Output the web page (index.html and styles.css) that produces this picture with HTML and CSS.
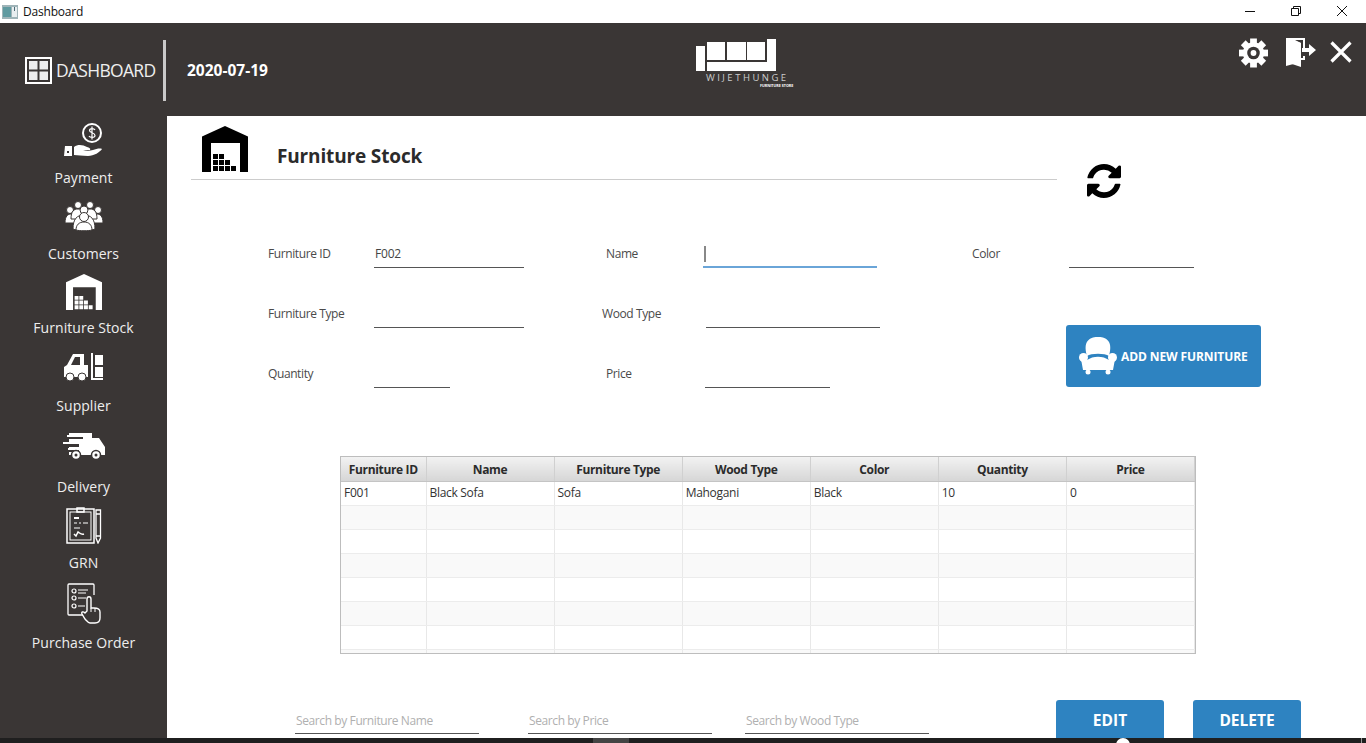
FILE: index.html
```html
<!DOCTYPE html>
<html lang="en">
  <head>
    <meta charset="UTF-8">
    <meta name="viewport" content="width=device-width, initial-scale=1.0">
    <title>Dashboard</title>
    <link rel="stylesheet" href="styles.css">
  </head>
  <body>
    <!-- window title bar -->
    <div class="titlebar">
      <svg class="app-icon" width="16" height="14" viewBox="0 0 16 14">
        <rect width="16" height="14" fill="#9fb4b8"/>
        <rect x="1" y="2" width="8" height="10" fill="#5f9aa0"/>
        <rect x="10" y="2" width="5" height="10" fill="#e8eef0"/>
        <rect x="12" y="2" width="1" height="4" fill="#4d6a75"/>
      </svg>
      <span class="app-title">Dashboard</span>
      <div class="window-controls">
        <svg width="12" height="12" viewBox="0 0 12 12"><path d="M1 6.5H11" stroke="#111" fill="none"/></svg>
        <svg width="12" height="12" viewBox="0 0 12 12"><path d="M1.5 3.5H8.5V10.5H1.5ZM3.5 3.5V1.5H10.5V8.5H8.5" stroke="#111" fill="none"/></svg>
        <svg width="12" height="12" viewBox="0 0 12 12"><path d="M1 1L11 11M11 1L1 11" stroke="#111" fill="none"/></svg>
      </div>
    </div>

    <div class="app">
      <header class="topbar">
        <div class="brand">
          <svg width="27" height="27" viewBox="0 0 27 27">
            <rect width="27" height="27" fill="#fff"/>
            <rect x="2" y="2" width="23" height="23" fill="#3a3635"/>
            <rect x="4" y="4" width="8.5" height="8.5" fill="#eee"/>
            <rect x="14.5" y="4" width="8.5" height="8.5" fill="#eee"/>
            <rect x="4" y="14.5" width="8.5" height="8.5" fill="#eee"/>
            <rect x="14.5" y="14.5" width="8.5" height="8.5" fill="#eee"/>
          </svg>
          <span class="brand-name">DASHBOARD</span>
        </div>
        <div class="date">2020-07-19</div>
        <div class="logo">
          <svg width="82" height="34" viewBox="0 0 82 34">
            <rect x="0" y="8" width="9" height="25" fill="#fff"/>
            <rect x="11" y="4" width="18" height="18" fill="#fff"/>
            <rect x="31" y="4" width="19" height="18" fill="#fff"/>
            <rect x="51" y="4" width="18" height="18" fill="#fff"/>
            <rect x="71" y="1" width="9" height="32" fill="#fff"/>
            <rect x="11" y="24" width="69" height="9" fill="#fff"/>
          </svg>
          <div class="logo-name">WIJETHUNGE</div>
          <div class="logo-sub">FURNITURE STORE</div>
        </div>
        <div class="top-actions">
          <svg width="29" height="30" viewBox="0 0 30 30">
            <g fill="#fff">
              <circle cx="15" cy="15" r="11"/>
              <rect x="11.5" y="0" width="7" height="30"/>
              <rect x="11.5" y="0" width="7" height="30" transform="rotate(45 15 15)"/>
              <rect x="11.5" y="0" width="7" height="30" transform="rotate(90 15 15)"/>
              <rect x="11.5" y="0" width="7" height="30" transform="rotate(135 15 15)"/>
            </g>
            <circle cx="15" cy="15" r="6.5" fill="#3a3635"/>
            <circle cx="15" cy="15" r="3" fill="#fff"/>
          </svg>
          <svg class="door-icon" width="30" height="30" viewBox="0 0 30 30">
            <path d="M0 1H19V11H17V3H9L15 6V25L0 29Z" fill="#fff"/>
            <path d="M0 1L15 6V30L0 25Z" fill="#fff"/>
            <path d="M17 19H19V23H15V21H17Z" fill="#fff"/>
            <path d="M16 11H23V7L30 13L23 19V15H16Z" fill="#fff"/>
          </svg>
          <svg class="close-icon" width="22" height="22" viewBox="0 0 22 22">
            <path d="M1.5 1.5L20.5 20.5M20.5 1.5L1.5 20.5" stroke="#fff" stroke-width="3.2" fill="none"/>
          </svg>
        </div>
      </header>

      <div class="main">
        <nav class="sidebar">
          <a class="nav-item nav-payment">
            <svg width="39" height="34" viewBox="0 0 39 34">
              <circle cx="28" cy="10" r="9" fill="none" stroke="#fff" stroke-width="2"/>
              <path d="M31 7C30 5 25.5 5 25.5 7.5C25.5 10 31 9.5 31 12.5C31 15 26 15 25 13M28 3.5V16.5" fill="none" stroke="#fff" stroke-width="1.2"/>
              <path d="M1 23H8V33H0Z" fill="#fff"/>
              <rect x="3" y="28" width="2" height="2" fill="#3a3635"/>
              <path d="M10 24C14 21 19 22 23 24C25 25 27 25 26 27H19C22 28 26 28 29 27C32 26 36 25 38 26C36 29 30 33 24 33C18 33 14 32 10 32Z" fill="#fff"/>
            </svg>
            <span>Payment</span>
          </a>
          <a class="nav-item nav-customers">
            <svg width="38" height="30" viewBox="0 0 38 30">
              <g fill="#fff" stroke="#3a3635" stroke-width="1">
                <circle cx="13" cy="4" r="3.5"/>
                <circle cx="25" cy="4" r="3.5"/>
                <circle cx="5" cy="9" r="3.5"/>
                <circle cx="33" cy="9" r="3.5"/>
                <path d="M0 22C0 15 3 13 6 13C9 13 12 15 12 22Z"/>
                <path d="M26 22C26 15 29 13 32 13C35 13 38 15 38 22Z"/>
                <path d="M6 18C6 10 9 8 13 8C17 8 20 10 20 18Z"/>
                <path d="M18 18C18 10 21 8 25 8C29 8 32 10 32 18Z"/>
                <circle cx="19" cy="9" r="4"/>
                <path d="M8 28C8 18 12 14 19 14C26 14 30 18 30 28C26 30 12 30 8 28Z"/>
              </g>
              <circle cx="19" cy="16" r="4.5" fill="#fff" stroke="#3a3635"/>
              <path d="M11 29C11 24 14 21 19 21C24 21 27 24 27 29C24 30 14 30 11 29Z" fill="#fff" stroke="#3a3635"/>
            </svg>
            <span>Customers</span>
          </a>
          <a class="nav-item nav-stock">
            <svg width="36" height="36" viewBox="0 0 46 46">
              <path fill="#fff" d="M0 10.5L23 0L46 10.5V46H38V17H9V46H0Z"/>
              <path fill="#fff" d="M11 28h5v5h-5zM17 28h5v5h-5zM11 34h5v5h-5zM17 34h5v5h-5zM23 34h5v5h-5zM11 40h5v5h-5zM17 40h5v5h-5zM23 40h5v5h-5zM29 40h5v5h-5z"/>
            </svg>
            <span>Furniture Stock</span>
          </a>
          <a class="nav-item nav-supplier">
            <svg width="39" height="28" viewBox="0 0 39 28">
              <path fill-rule="evenodd" fill="#fff" d="M0 24V14L3 12L9 1H20V12H24V24ZM7 12H16V4H11Z"/>
              <circle cx="6" cy="24" r="4" fill="#fff" stroke="#3a3635"/>
              <circle cx="18" cy="24" r="4" fill="#fff" stroke="#3a3635"/>
              <path fill="#fff" d="M27 0H29V25H39V27H27ZM31 2H39V12H31ZM31 14H39V24H31Z"/>
            </svg>
            <span>Supplier</span>
          </a>
          <a class="nav-item nav-delivery">
            <svg width="42" height="27" viewBox="0 0 42 27">
              <path fill="#fff" d="M6 0H29V5H36L42 14V22H6Z"/>
              <path fill="#3a3635" d="M0 11H16V14H0ZM4 4H20V6H4ZM6 17H16V19H6Z"/>
              <path fill="#fff" d="M4 2H16V4H4ZM0 9H15V11H0ZM5 15H15V17H5Z"/>
              <circle cx="13" cy="22" r="4.5" fill="#fff" stroke="#3a3635" stroke-width="1.5"/>
              <circle cx="13" cy="22" r="1.5" fill="#3a3635"/>
              <circle cx="33" cy="22" r="4.5" fill="#fff" stroke="#3a3635" stroke-width="1.5"/>
              <circle cx="33" cy="22" r="1.5" fill="#3a3635"/>
            </svg>
            <span>Delivery</span>
          </a>
          <a class="nav-item nav-grn">
            <svg width="36" height="37" viewBox="0 0 36 37">
              <g fill="none" stroke="#fff">
                <rect x="1" y="2" width="27" height="34" stroke-width="1.5"/>
                <rect x="4" y="5" width="21" height="28"/>
                <rect x="11" y="1" width="7" height="4" stroke-width="1.5"/>
                <path d="M30 3H34.5V31L32 36L30 31ZM30 7H34.5M30 29H34.5" stroke-width="1.3"/>
                <path d="M8 11H13" stroke-width="2"/>
                <path d="M8 16H11M13 16H15M17 16H22M8 21H14" stroke-width="1.2"/>
                <path d="M8 27L10 29L12 25C14 26 15 28 18 27" stroke-width="1.5"/>
              </g>
            </svg>
            <span>GRN</span>
          </a>
          <a class="nav-item nav-order">
            <svg width="34" height="41" viewBox="0 0 34 41">
              <g fill="none" stroke="#fff">
                <path d="M17 32H2Q1 32 1 31V2Q1 1 2 1H26Q27 1 27 2V12" stroke-width="1.3"/>
                <circle cx="7" cy="8" r="2" stroke-width="1.2"/>
                <circle cx="7" cy="15" r="2" stroke-width="1.2"/>
                <circle cx="7" cy="23" r="2" stroke-width="1.2"/>
                <path d="M11 7H21M11 10H19M11 15H19M11 23H18" stroke-width="1.2"/>
              </g>
              <path d="M20 28V16C20 13 24 13 24 16V25L27 25C30 25 33 26 33 29V35C33 38 31 40 28 40H23C21 40 20 38 18 36L15 31C14 29 16 28 18 30Z" fill="#3a3635" stroke="#fff" stroke-width="1.4"/>
              <path d="M24 25V29M28 25V29" stroke="#fff"/>
            </svg>
            <span>Purchase Order</span>
          </a>
        </nav>

        <main class="content">
          <div class="page-head">
            <div class="page-title">
              <svg width="46" height="46" viewBox="0 0 46 46">
                <path fill="#000" d="M0 10.5L23 0L46 10.5V46H38V17H9V46H0Z"/>
                <path fill="#000" d="M11 28h5v5h-5zM17 28h5v5h-5zM11 34h5v5h-5zM17 34h5v5h-5zM23 34h5v5h-5zM11 40h5v5h-5zM17 40h5v5h-5zM23 40h5v5h-5zM29 40h5v5h-5z"/>
              </svg>
              <h1>Furniture Stock</h1>
            </div>
            <svg class="refresh" width="34" height="34" viewBox="128 128 1536 1536">
              <path fill="#000" d="M1639 1056q0 5-1 7-64 268-268 434.5t-478 166.5q-146 0-282.5-55t-243.5-157l-129 129q-19 19-45 19t-45-19-19-45v-448q0-26 19-45t45-19h448q26 0 45 19t19 45-19 45l-137 137q71 66 161 102t187 36q134 0 250-65t186-179q11-17 53-117 8-23 30-23h192q13 0 22.5 9.5t9.5 22.5zm25-800v448q0 26-19 45t-45 19h-448q-26 0-45-19t-19-45 19-45l138-138q-148-137-349-137-134 0-250 65t-186 179q-11 17-53 117-8 23-30 23h-199q-13 0-22.5-9.5t-9.5-22.5v-7q65-268 270-434.5t480-166.5q146 0 284 55.5t245 156.5l130-129q19-19 45-19t45 19 19 45z"/>
            </svg>
          </div>

          <form class="stock-form">
            <label>Furniture ID</label>
            <input class="field field-long" type="text" value="F002">
            <label>Name</label>
            <input class="field field-name field-focus" type="text">
            <label>Color</label>
            <input class="field field-color" type="text">

            <label>Furniture Type</label>
            <input class="field field-long" type="text">
            <label class="label-wood">Wood Type</label>
            <input class="field field-name field-wood" type="text">
            <button class="btn btn-add" type="button">
              <svg width="38" height="38" viewBox="0 0 38 38">
                <path fill="#fff" d="M8 19C3 2 13 0 19 0C25 0 35 2 30 19C26 16 12 16 8 19Z"/>
                <circle cx="4.5" cy="20.5" r="4.5" fill="#fff"/>
                <circle cx="33.5" cy="20.5" r="4.5" fill="#fff"/>
                <path fill="#fff" d="M2 22H8V23C14 18.5 24 18.5 30 23V22H36L34 33H4Z"/>
                <circle cx="9" cy="35" r="2.5" fill="#fff"/>
                <circle cx="29" cy="35" r="2.5" fill="#fff"/>
              </svg>
              <span>ADD NEW FURNITURE</span>
            </button>

            <label>Quantity</label>
            <input class="field field-qty" type="text">
            <label>Price</label>
            <input class="field field-price" type="text">
          </form>

          <div class="table-wrap">
            <table class="stock-table">
              <colgroup>
                <col class="col-id">
                <col><col><col><col><col><col>
              </colgroup>
              <thead>
                <tr>
                  <th>Furniture ID</th>
                  <th>Name</th>
                  <th>Furniture Type</th>
                  <th>Wood Type</th>
                  <th>Color</th>
                  <th>Quantity</th>
                  <th>Price</th>
                </tr>
              </thead>
              <tbody>
                <tr><td>F001</td><td>Black Sofa</td><td>Sofa</td><td>Mahogani</td><td>Black</td><td>10</td><td>0</td></tr>
                <tr><td></td><td></td><td></td><td></td><td></td><td></td><td></td></tr>
                <tr><td></td><td></td><td></td><td></td><td></td><td></td><td></td></tr>
                <tr><td></td><td></td><td></td><td></td><td></td><td></td><td></td></tr>
                <tr><td></td><td></td><td></td><td></td><td></td><td></td><td></td></tr>
                <tr><td></td><td></td><td></td><td></td><td></td><td></td><td></td></tr>
                <tr><td></td><td></td><td></td><td></td><td></td><td></td><td></td></tr>
                <tr><td></td><td></td><td></td><td></td><td></td><td></td><td></td></tr>
              </tbody>
            </table>
          </div>

          <div class="bottom-row">
            <input class="search" type="text" placeholder="Search by Furniture Name">
            <input class="search" type="text" placeholder="Search by Price">
            <input class="search" type="text" placeholder="Search by Wood Type">
            <button class="btn btn-edit" type="button">EDIT</button>
            <button class="btn btn-delete" type="button">DELETE</button>
          </div>
        </main>
      </div>
    </div>

    <div class="taskbar">
      <span class="task-active"></span>
      <span class="task-dot"></span>
      <span class="task-line"></span>
    </div>
  </body>
</html>
```

FILE: styles.css
```css
html, body {
  height: 743px;
  margin: 0;
  padding: 0;
  overflow: hidden;
}
body {
  display: flex;
  flex-direction: column;
  font-family: "Open Sans", "Noto Sans", sans-serif;
  background-color: #fff;
  color: #444;
}

/* title bar */
.titlebar {
  display: flex;
  align-items: center;
  height: 23px;
  flex: none;
  padding-left: 2px;
  font-size: 12px;
  color: #111;
}
.app-title {
  margin-left: 5px;
  letter-spacing: -0.2px;
}
.window-controls {
  display: flex;
  gap: 34px;
  margin-left: auto;
  margin-right: 18px;
  margin-top: -2px;
}

/* app frame */
.app {
  display: flex;
  flex-direction: column;
  flex: none;
  height: 715px;
  overflow: hidden;
}
.topbar {
  display: flex;
  flex: none;
  height: 93px;
  background-color: #3a3635;
  color: #fff;
}
.brand {
  display: flex;
  align-items: center;
  width: 138px;
  height: 61px;
  margin-top: 17px;
  padding-left: 25px;
  border-right: 3px solid #c9c9c9;
}
.brand-name {
  margin-left: 4px;
  margin-top: -2px;
  font-size: 17.5px;
  font-weight: 400;
  letter-spacing: -0.7px;
  color: #eee;
  white-space: nowrap;
}
.date {
  margin-left: 21px;
  margin-top: 37px;
  font-size: 15.5px;
  font-weight: 700;
  line-height: 20px;
}
.logo {
  width: 98px;
  margin-left: 428px;
  margin-top: 15px;
}
.logo svg {
  display: block;
}
.logo-name {
  margin-left: 10px;
  font-size: 9.5px;
  line-height: 11px;
  letter-spacing: 2.5px;
  color: #ccc;
  white-space: nowrap;
}
.logo-sub {
  margin-left: 64px;
  font-size: 3.7px;
  line-height: 6px;
  font-weight: 700;
  white-space: nowrap;
}
.top-actions {
  display: flex;
  align-items: flex-start;
  margin-left: auto;
  margin-right: 14px;
  padding-top: 15px;
}
.door-icon {
  margin-left: 18px;
  margin-top: -1px;
}
.close-icon {
  margin-left: 14px;
  margin-top: 3px;
}

.main {
  display: flex;
  flex: 1;
  min-height: 0;
}

/* sidebar */
.sidebar {
  width: 167px;
  flex: none;
  background-color: #3a3635;
}
.nav-item {
  display: flex;
  flex-direction: column;
  align-items: center;
  justify-content: flex-end;
  color: #eee;
  font-size: 14px;
  line-height: 20px;
  letter-spacing: 0.05px;
}
.nav-payment { height: 72px; }
.nav-payment svg { margin-bottom: 11px; }
.nav-customers { height: 76px; }
.nav-customers svg { margin-bottom: 13px; }
.nav-stock { height: 74px; }
.nav-stock svg { margin-bottom: 8px; }
.nav-supplier { height: 78px; }
.nav-supplier svg { margin-bottom: 15px; }
.nav-delivery { height: 81px; }
.nav-delivery svg { margin-bottom: 17px; }
.nav-grn { height: 76px; }
.nav-grn svg { margin-bottom: 9px; }
.nav-order { height: 80px; }
.nav-order svg { margin-bottom: 9px; }

/* content */
.content {
  flex: 1;
  min-width: 0;
}
.page-head {
  display: flex;
  align-items: flex-start;
  padding-top: 10px;
  padding-left: 24px;
}
.page-title {
  display: flex;
  align-items: flex-start;
  width: 855px;
  height: 53px;
  padding-left: 11px;
  border-bottom: 1px solid #ccc;
}
.page-title h1 {
  margin: 15px 0 0 29px;
  font-size: 19px;
  line-height: 30px;
  font-weight: 700;
  color: #2b2b2b;
  letter-spacing: -0.15px;
}
.refresh {
  margin-left: 30px;
  margin-top: 38px;
}

/* form */
.stock-form {
  display: grid;
  grid-template-columns: 106px 232px 97px 269px 97px 192px;
  grid-auto-rows: 30px;
  row-gap: 30px;
  align-items: center;
  margin-top: 40px;
  margin-left: 101px;
  font-size: 12px;
}
.stock-form label {
  letter-spacing: -0.4px;
  color: #4a4a4a;
}
.label-wood {
  margin-left: -4px;
}
.field {
  box-sizing: border-box;
  height: 30px;
  padding: 2px 1px 0;
  border: 0;
  border-bottom: 1px solid #555;
  background: transparent;
  font-family: inherit;
  font-size: 12px;
  color: #444;
  outline: none;
  letter-spacing: -0.2px;
}
.field-long { width: 150px; }
.field-name { width: 174px; }
.field-color { width: 125px; }
.field-qty { width: 76px; }
.field-price { width: 125px; margin-left: 2px; }
.field-wood { margin-left: 3px; }
.field-focus {
  border-bottom: 2px solid #6aa5d8;
  background: linear-gradient(#888, #888) no-repeat 1px 8px / 2px 16px;
}

/* buttons */
.btn {
  border: 0;
  border-radius: 3px;
  background-color: #2e83c1;
  color: #fff;
  font-family: inherit;
  font-weight: 700;
  padding: 0;
}
.btn-add {
  display: flex;
  align-items: center;
  grid-column: 5 / 7;
  grid-row: 2 / 4;
  align-self: end;
  width: 195px;
  height: 62px;
  margin-left: 94px;
  margin-bottom: 1px;
  padding-left: 13px;
  font-size: 12px;
  letter-spacing: -0.1px;
}
.btn-add span {
  margin-left: 4px;
  white-space: nowrap;
}

/* table */
.table-wrap {
  box-sizing: border-box;
  width: 856px;
  height: 198px;
  margin-top: 68px;
  margin-left: 173px;
  border: 1px solid #bdbdbd;
  overflow: hidden;
}
.stock-table {
  width: 854px;
  table-layout: fixed;
  border-collapse: collapse;
  font-size: 12px;
  color: #333;
}
.col-id {
  width: 85px;
}
.stock-table th {
  box-sizing: border-box;
  height: 24px;
  padding: 1px 0 0;
  border-right: 1px solid #d0d0d0;
  border-bottom: 1px solid #c4c4c4;
  background: linear-gradient(#f2f2f2, #d6d6d6);
  font-weight: 700;
  color: #2b2b2b;
  letter-spacing: -0.35px;
}
.stock-table td {
  box-sizing: border-box;
  height: 24px;
  padding: 0 3px 2px;
  border-right: 1px solid #e8e8e8;
  border-bottom: 1px solid #ececec;
  letter-spacing: -0.3px;
}
.stock-table tbody tr:nth-child(even) {
  background-color: #f9f9f9;
}

/* search and actions */
.bottom-row {
  display: flex;
  align-items: flex-start;
  margin-top: 46px;
  margin-left: 128px;
}
.search {
  box-sizing: border-box;
  width: 184px;
  height: 34px;
  margin-right: 49px;
  padding: 8px 1px 0;
  border: 0;
  border-bottom: 1px solid #555;
  background: transparent;
  font-family: inherit;
  font-size: 12px;
  letter-spacing: -0.4px;
  outline: none;
}
.search:nth-of-type(2) {
  margin-right: 33px;
}
.search:nth-of-type(3) {
  margin-right: 0;
}
.search::placeholder {
  color: #b0b0b0;
  opacity: 1;
}
.btn-edit, .btn-delete {
  width: 108px;
  height: 40px;
  font-size: 15.5px;
}
.btn-edit {
  margin-left: 127px;
}
.btn-delete {
  margin-left: 29px;
}

/* desktop taskbar peeking below the window */
.taskbar {
  display: flex;
  flex: none;
  height: 5px;
  background-color: #1f1f1f;
  overflow: hidden;
}
.task-active {
  width: 36px;
  margin-left: 593px;
  background-color: #444;
}
.task-dot {
  width: 14px;
  height: 14px;
  margin-left: 487px;
  border-radius: 50%;
  background-color: #fff;
}
.task-line {
  width: 1px;
  margin-left: 231px;
  background-color: #999;
}
```
